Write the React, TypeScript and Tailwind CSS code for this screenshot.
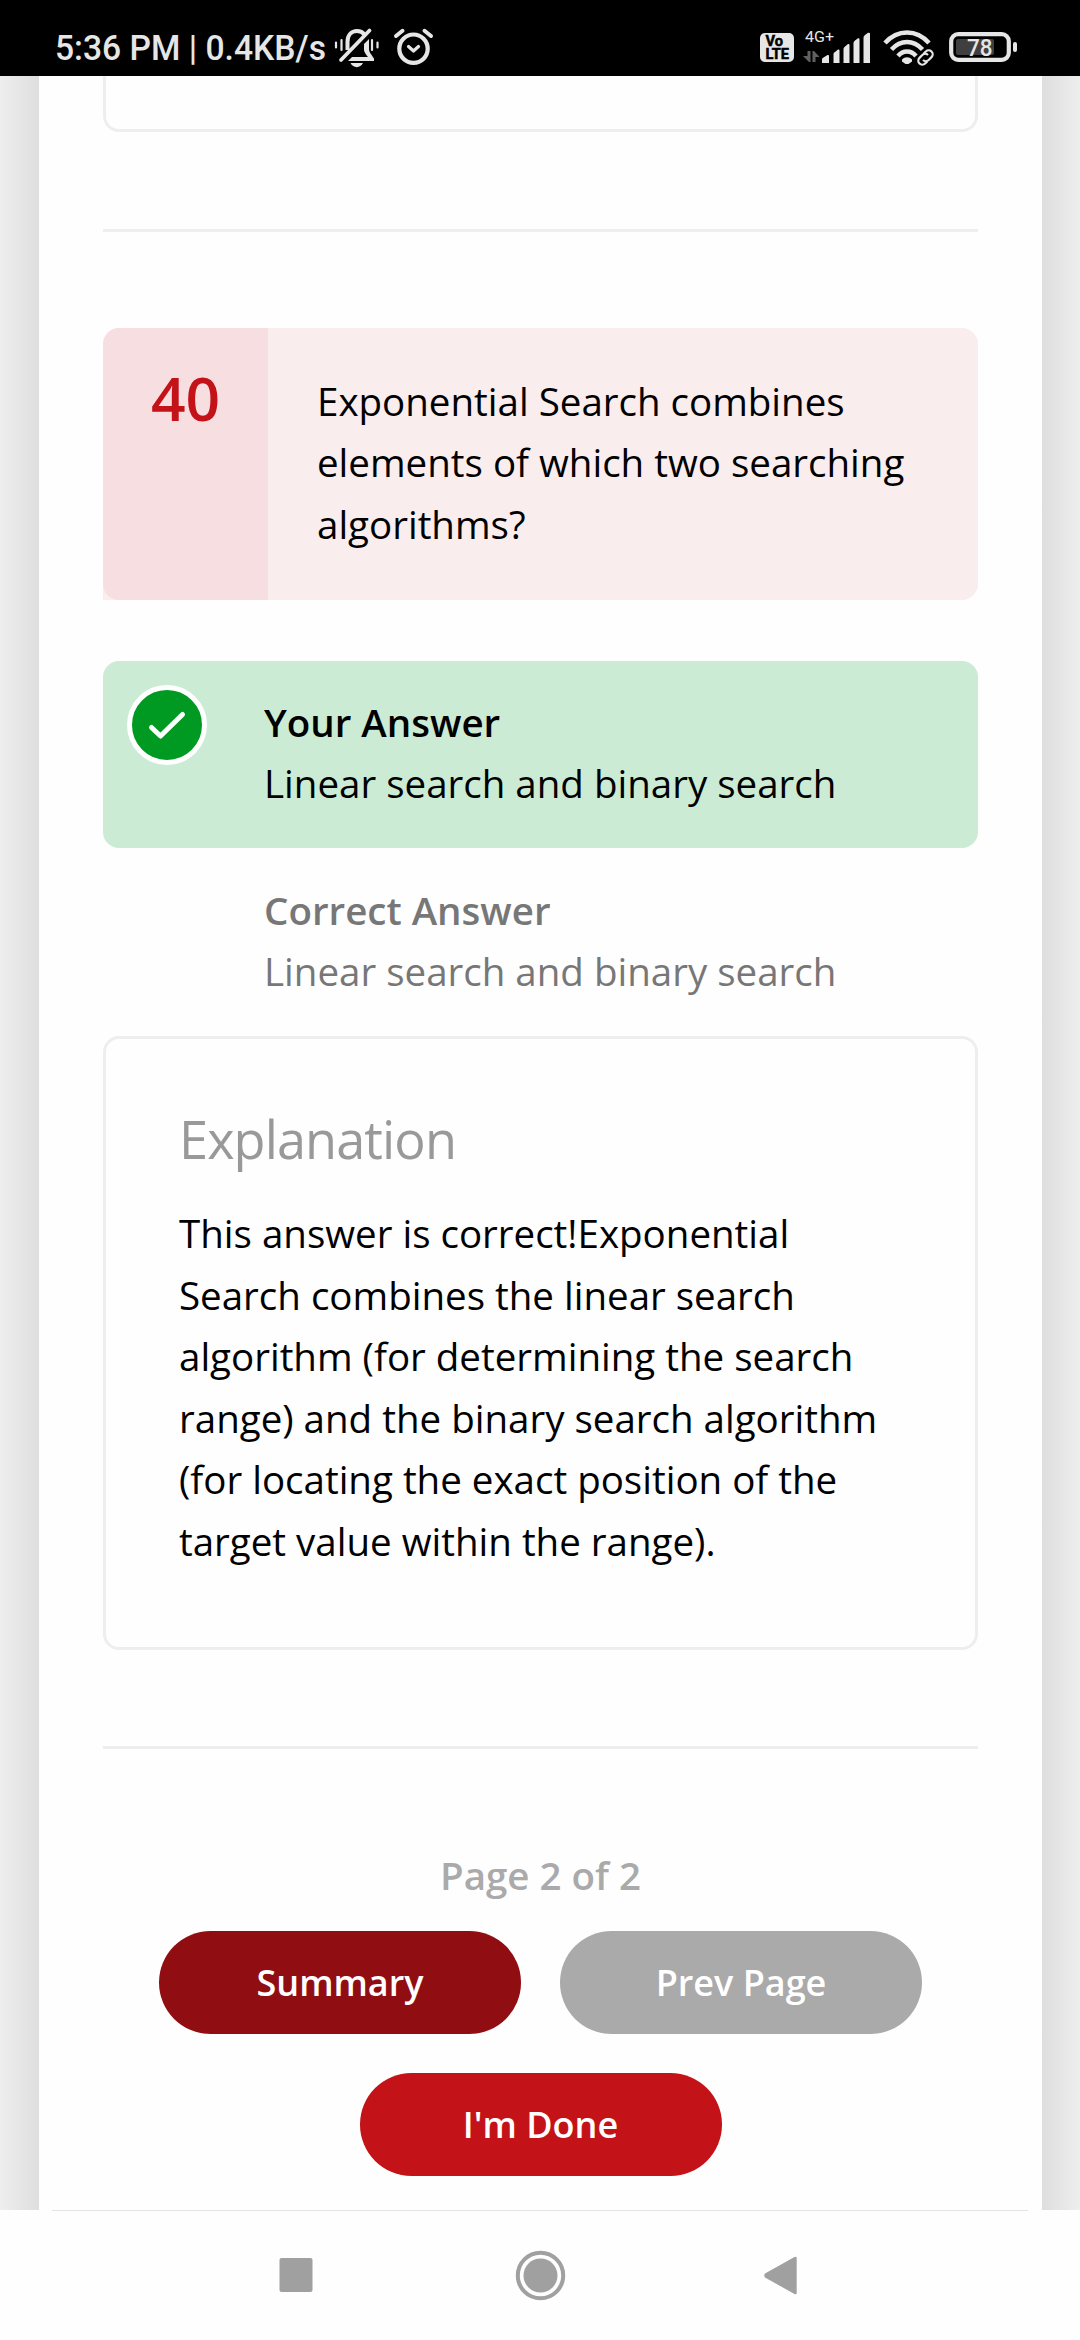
import React from "react";

const ink = "#e6e6e6";

function StatusBar() {
  return (
    <header className="h-[76px] w-full shrink-0 bg-black text-[#e6e6e6] font-['Roboto',sans-serif]">
      <svg width="1080" height="76" viewBox="0 0 1080 76" fill="none">
        <text x="55" y="60" fontSize="34.500" fontWeight="500" fill={ink} textLength="271" lengthAdjust="spacingAndGlyphs">
          5:36 PM | 0.4KB/s
        </text>
        <g stroke={ink} strokeLinecap="round">
          <path d="M347.500 50V42c0-7 4-11 9.500-11 3.500 0 6 1.500 7.500 3.500" strokeWidth="4" strokeLinecap="butt" />
          <path d="M341 60L369.500 30.500" strokeWidth="3.800" />
          <path d="M336 42.500v5M341.500 40v10M372 40v10M377.500 42.500v5" strokeWidth="2.200" />
        </g>
        <path d="M364 44l5-5v10c0 3 2 5 5 9.500v2.500h-26l4-4h16c-2-2.500-4-5-4-7z" fill={ink} />
        <path d="M350.500 63h12.500c-2.500 5.500-10 5.500-12.500 0z" fill={ink} />
        <g stroke={ink} strokeLinecap="round">
          <circle cx="413.500" cy="48.700" r="14.200" strokeWidth="4.200" />
          <path d="M396 36l6.500-5.200M431 36l-6.500-5.200" strokeWidth="4" />
          <path d="M408.500 46.500l5 4.500 5-4.500" strokeWidth="3.200" strokeLinejoin="round" />
        </g>

        <rect x="760" y="33" width="34" height="29" rx="5" fill={ink} />
        <g fill="#000" stroke="#000" strokeWidth="0.500" fontSize="14" fontWeight="700">
          <text x="765.500" y="46" textLength="17.500" lengthAdjust="spacingAndGlyphs">Vo</text>
          <text x="765.500" y="59" textLength="23.500" lengthAdjust="spacingAndGlyphs">LTE</text>
        </g>
        <text x="805" y="41.500" fontSize="15.500" fill={ink} textLength="29" lengthAdjust="spacingAndGlyphs">4G+</text>
        <g fill="#606060">
          <path d="M807.500 51h3v11h-1.500l-6-6h4.500z" />
          <path d="M812.500 62h3v-5h4l-5.500-6h-1.500z" />
        </g>
        <g fill={ink}>
          <path d="M822 59.500q0-1.500 1.500-2l4-2.500q1.500-.5 1.500 1v7h-7z" />
          <path d="M833.500 54q0-1.500 1.500-2l3-2.500q1.500-.5 1.500 1v12.500h-6z" />
          <path d="M843.500 49q0-1.500 1.500-2.500l3-2.500q1.500-.5 1.500 1v18h-6z" />
          <path d="M853.500 43q0-1.500 1.500-2.500l3-2.200q1.500-.5 1.500 1v23.700h-6z" />
          <path d="M863.500 37.500q0-1.500 1.500-2.500l3-2.200q2-.5 2 1v29.200h-6.500z" />
        </g>
        <g stroke={ink} strokeWidth="4.400">
          <path d="M885 43c12.500-14 31.500-14 44 0" />
          <path d="M891.500 49.500c9-10 22-10 31 0" />
          <path d="M898 56c5-6 13-6 18 0" />
        </g>
        <path d="M902 59.500c3-3 7-3 10 0v2l-3.500 2.500h-3l-3.500-2.500z" fill={ink} />
        <g stroke="#000" strokeWidth="6">
          <path d="M917 65l12-13" />
        </g>
        <g stroke={ink} strokeWidth="2.200" transform="rotate(-45 925.500 57.500)">
          <path d="M924 61.500h-3a4 4 0 010-8h4a4 4 0 014 4" />
          <path d="M927 53.500h3a4 4 0 010 8h-4a4 4 0 01-4-4" />
        </g>
        <rect x="951.200" y="34.200" width="57.600" height="25.600" rx="7" stroke={ink} strokeWidth="4.200" />
        <rect x="956" y="39" width="38" height="16" rx="2" fill="#3f3f3f" />
        <text x="967" y="55.500" fontSize="23" fontWeight="500" fill={ink} textLength="25.500" lengthAdjust="spacingAndGlyphs">78</text>
        <rect x="1013" y="42" width="4" height="10" rx="2" fill={ink} />
      </svg>
    </header>
  );
}

function Answer({ title, text }: { title: string; text: string }) {
  return (
    <div className="pl-[161px]">
      <p className="font-semibold">{title}</p>
      <p>{text}</p>
    </div>
  );
}

function PillButton({ label, tone }: { label: string; tone: string }) {
  return (
    <button className={`h-[103px] w-[362px] rounded-full text-[36px] font-semibold text-white ${tone}`}>
      {label}
    </button>
  );
}

function NavBar() {
  return (
    <nav className="h-[130px] shrink-0 bg-[#fefefe]">
      <div className="mr-[52px] ml-[52px] h-px bg-[#e4e4e4]" />
      <svg width="1080" height="129" viewBox="0 2211 1080 129" fill="#a0a0a0">
        <rect x="279.500" y="2258" width="33" height="34" rx="2" />
        <circle cx="540.500" cy="2275.500" r="22.700" fill="none" stroke="#a0a0a0" strokeWidth="4" />
        <circle cx="540.500" cy="2275.500" r="17" />
        <path d="M765 2273.500L794.500 2257q2.200-1 2.200 1v35q0 2-2.200 1L765 2277.500q-1.500-2 0-4z" />
      </svg>
    </nav>
  );
}

export default function App() {
  return (
    <div className="flex h-[2340px] w-[1080px] flex-col overflow-hidden bg-white font-['Open_Sans',sans-serif] text-[38.5px] leading-[61.6px] text-black">
      <StatusBar />
      <div className="flex h-[2134px] shrink-0">
        <div className="w-[39px] bg-linear-to-r from-[#eeeeee] to-[#dedede]" />
        <main className="w-[1003px] bg-[#fefefe] px-16">
          <div className="h-14 rounded-b-2xl border-3 border-t-0 border-[#eeeeee]" />
          <div className="mt-[97px] h-[3px] bg-[#eeeeee]" />

          <section className="mt-24 flex h-[272px] rounded-2xl rounded-bl-none bg-[#faeded]">
            <div className="w-[165px] rounded-l-2xl bg-[#f7dee0] pt-[39px] text-center text-[60.5px] font-semibold text-[#c31218]">
              40
            </div>
            <p className="w-[640px] pt-[42.5px] pl-[49px]">
              Exponential Search combines elements of which two searching algorithms?
            </p>
          </section>

          <section className="relative mt-[61px] h-[187px] rounded-2xl bg-[#ccebd4] pt-[30.6px]">
            <div className="absolute top-6 left-6 flex size-20 items-center justify-center rounded-full border-5 border-white bg-[#009a22]">
              <svg width="70" height="70" viewBox="0 0 70 70" fill="none" stroke="#fff" strokeWidth="5" strokeLinecap="round" strokeLinejoin="round">
                <path d="M19.500 37.500L28.500 46L50.500 24.500" />
              </svg>
            </div>
            <Answer title="Your Answer" text="Linear search and binary search" />
          </section>
          <section className="h-[188px] pt-[31.6px] text-[#777777]">
            <Answer title="Correct Answer" text="Linear search and binary search" />
          </section>

          <section className="h-[614px] rounded-2xl border-3 border-[#eeeeee] pt-[68.5px] pl-[73px]">
            <h2 className="text-[52.25px] tracking-[-0.9px] text-[#999999]">Explanation</h2>
            <p className="mt-[33.9px] w-[710px]">
              This answer is correct!Exponential Search combines the linear search algorithm (for determining the search
              range) and the binary search algorithm (for locating the exact position of the target value within the range).
            </p>
          </section>
          <div className="mt-24 h-[3px] bg-[#eeeeee]" />

          <p className="mt-24 text-center font-semibold text-[#aaaaaa]">Page 2 of 2</p>
          <div className="mt-[24.4px] flex flex-wrap justify-center gap-x-[39px] gap-y-[39px]">
            <PillButton label="Summary" tone="bg-[#900d12]" />
            <PillButton label="Prev Page" tone="bg-[#aaaaaa]" />
            <PillButton label="I'm Done" tone="bg-[#c31218]" />
          </div>
        </main>
        <div className="w-[38px] bg-linear-to-r from-[#dedede] to-[#eeeeee]" />
      </div>
      <NavBar />
    </div>
  );
}
